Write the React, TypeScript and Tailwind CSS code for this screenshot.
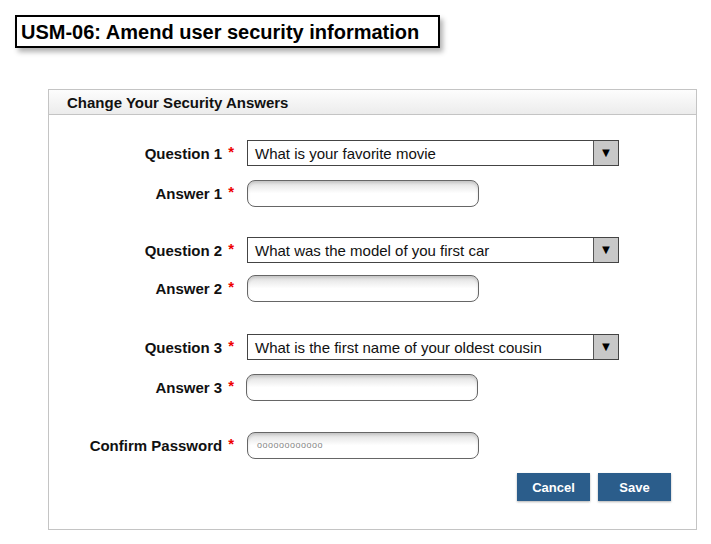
const questions = [
  { q: "Question 1", a: "Answer 1", value: "What is your favorite movie" },
  { q: "Question 2", a: "Answer 2", value: "What was the model of you first car" },
  { q: "Question 3", a: "Answer 3", value: "What is the first name of your oldest cousin" },
];

function Label({ text }: { text: string }) {
  return (
    <div className="flex w-[198px] items-center justify-end gap-[6px] pr-[13px] pt-[2px] text-[15px] font-bold text-[#111]">
      <span>{text}</span>
      <span className="relative -top-[2px] text-[15px] text-[#e00]">*</span>
    </div>
  );
}

function Select({ value }: { value: string }) {
  return (
    <div className="flex h-[26px] w-[372px] border border-[#444] bg-white">
      <div className="flex flex-1 items-center pl-[7px] pt-[2px] text-[15px] text-[#111]">{value}</div>
      <div className="flex w-[25px] items-center justify-center border-l border-[#555] bg-[#c8c8c8] text-[13px] text-black">
        ▼
      </div>
    </div>
  );
}

function Input({ children }: { children?: React.ReactNode }) {
  return (
    <div className="flex h-[27px] w-[232px] items-center rounded-[8px] border border-[#666] bg-gradient-to-b from-[#dedede] via-white to-white pl-[9px] shadow-[inset_0_2px_3px_rgba(0,0,0,0.12)]">
      {children}
    </div>
  );
}

export default function App() {
  return (
    <div
      className="relative h-[544px] w-[711px] bg-white"
      style={{ fontFamily: '"Liberation Sans", Arial, sans-serif' }}
    >
      <div className="pl-[15px] pt-[15px]">
        <div className="flex h-[33px] w-[425px] items-center border-2 border-black bg-white pl-[4px] text-[20px] font-bold text-black shadow-[3px_4px_5px_rgba(0,0,0,0.3)]">
          USM-06: Amend user security information
        </div>
      </div>

      <div className="ml-[48px] mt-[41px] h-[441px] w-[649px] border border-[#c4c4c4]">
        <div className="flex h-[25px] items-center border-b border-[#c4c4c4] bg-gradient-to-b from-[#fdfdfd] to-[#ececec] pl-[18px] pt-[2px] text-[15px] font-bold text-[#111]">
          Change Your Security Answers
        </div>

        <div className="flex flex-col pt-[25px]">
          {questions.map((item, i) => (
            <div key={item.q} className={i === 0 ? "" : i === 1 ? "mt-[30px]" : "mt-[32px]"}>
              <div className="flex items-center">
                <Label text={item.q} />
                <Select value={item.value} />
              </div>
              <div className={`flex items-center ${i === 1 ? "mt-[12px]" : "mt-[14px]"}`}>
                <Label text={item.a} />
                <div className={i === 2 ? "-ml-[1px]" : ""}>
                  <Input />
                </div>
              </div>
            </div>
          ))}

          <div className="mt-[31px] flex items-center">
            <Label text="Confirm Password" />
            <Input>
              <span className="text-[9px] tracking-[0.5px] text-[#888]">oooooooooooo</span>
            </Input>
          </div>

          <div className="mt-[14px] flex justify-end gap-[8px] pr-[25px]">
            <button className="h-[28px] w-[73px] bg-[#2b5d8b] pt-[1px] text-[13px] font-bold text-white shadow-[0_1px_2px_rgba(0,0,0,0.3)]">
              Cancel
            </button>
            <button className="h-[28px] w-[73px] bg-[#2b5d8b] pt-[1px] text-[13px] font-bold text-white shadow-[0_1px_2px_rgba(0,0,0,0.3)]">
              Save
            </button>
          </div>
        </div>
      </div>
    </div>
  );
}
